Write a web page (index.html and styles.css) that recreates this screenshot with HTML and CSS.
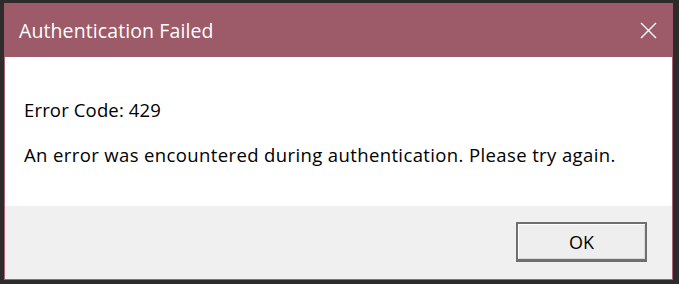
FILE: index.html
```html
<!DOCTYPE html>
<html>
<head>
<meta charset="utf-8">
<link rel="stylesheet" href="styles.css">
</head>
<body>
<div class="window">
  <div class="titlebar">
    <span class="title">Authentication Failed</span>
    <span class="close">
      <svg width="17" height="17" viewBox="0 0 17 17"><path d="M1 1 L16 16 M16 1 L1 16" stroke="#fff" stroke-width="1.4" fill="none"/></svg>
    </span>
  </div>
  <div class="content">
    <p class="line code">Error Code: 429</p>
    <p class="line msg">An error was encountered during authentication. Please try again.</p>
  </div>
  <div class="footer">
    <button class="ok">OK</button>
  </div>
</div>
</body>
</html>
```
FILE: styles.css
```css
html, body {
  margin: 0;
  padding: 0;
  background: #2e2b2c;
  width: 679px;
  height: 284px;
  overflow: hidden;
}
body {
  font-family: "Open Sans", "Noto Sans", sans-serif;
  padding: 3px 6px 4px 4px;
  box-sizing: border-box;
}
.window {
  width: 669px;
  height: 277px;
  box-sizing: border-box;
  border: 1px solid #a7636f;
  border-top: none;
  display: flex;
  flex-direction: column;
  background: #fff;
}
.titlebar {
  height: 54px;
  background: #9d5a68;
  margin: 0 -1px;
  display: flex;
  align-items: center;
  justify-content: space-between;
  padding: 0 16px 0 15px;
  flex: none;
}
.title {
  color: #fff;
  font-size: 19.5px;
  letter-spacing: 0.1px;
}
.close {
  display: flex;
  margin-top: 1px;
}
.content {
  flex: none;
  height: 149px;
  padding: 42px 0 0 19px;
  box-sizing: border-box;
  color: #000;
}
.line {
  margin: 0;
  line-height: 22px;
  font-size: 18.5px;
}
.code {
  letter-spacing: 0.15px;
}
.msg {
  margin-top: 23px;
  letter-spacing: 0.38px;
}
.footer {
  flex: 1;
  background: #f0f0f0;
  display: flex;
  justify-content: flex-end;
  align-items: flex-start;
  padding: 16px 25px 0 0;
}
.ok {
  width: 131px;
  height: 40px;
  background: #eeeeee;
  border: 2px solid #6f6f6f;
  border-bottom-width: 3px;
  box-shadow: inset 1px 1px 0 #fff, inset -1px -1px 0 #d8d8d8;
  font-family: "Open Sans", "Noto Sans", sans-serif;
  font-size: 18px;
  color: #000;
  padding: 0;
}
```
